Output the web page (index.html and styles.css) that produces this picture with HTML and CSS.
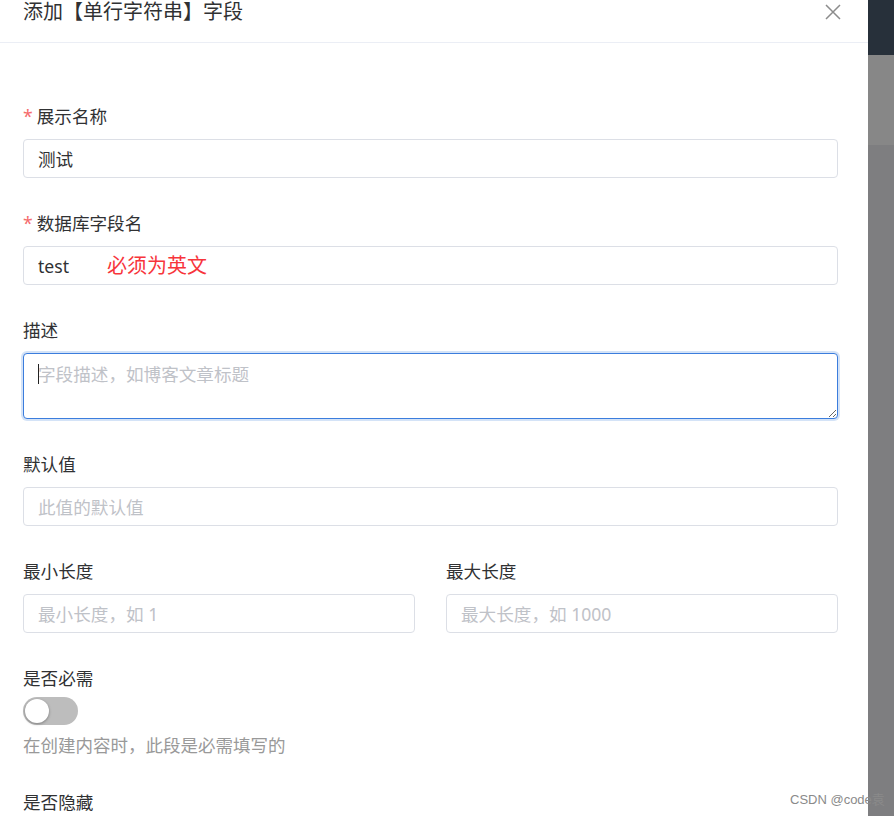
FILE: index.html
```html
<!DOCTYPE html>
<html lang="zh-CN">
<head>
<meta charset="utf-8">
<link rel="stylesheet" href="styles.css">
</head>
<body>
<div class="page">
  <div class="drawer">
    <div class="drawer-header">
      <span class="drawer-title">添加【单行字符串】字段</span>
      <svg class="close" width="16" height="16" viewBox="0 0 16 16"><path d="M1 1 L15 15 M15 1 L1 15" stroke="#8c8c8c" stroke-width="1.5" fill="none"/></svg>
    </div>
    <div class="drawer-body">
      <div class="field">
        <label class="label"><span class="req">*</span>展示名称</label>
        <input class="input" type="text" value="测试">
      </div>
      <div class="field">
        <label class="label"><span class="req">*</span>数据库字段名</label>
        <div class="input-wrap">
          <input class="input" type="text" value="test">
          <span class="note">必须为英文</span>
        </div>
      </div>
      <div class="field">
        <label class="label">描述</label>
        <div class="input-wrap">
          <textarea class="textarea" placeholder="字段描述，如博客文章标题"></textarea>
          <span class="caret"></span>
        </div>
      </div>
      <div class="field">
        <label class="label">默认值</label>
        <input class="input" type="text" placeholder="此值的默认值">
      </div>
      <div class="row">
        <div class="field">
          <label class="label">最小长度</label>
          <input class="input" type="text" placeholder="最小长度，如 1">
        </div>
        <div class="field">
          <label class="label">最大长度</label>
          <input class="input" type="text" placeholder="最大长度，如 1000">
        </div>
      </div>
      <div class="field">
        <label class="label">是否必需</label>
        <div class="switch"><span class="knob"></span></div>
        <div class="help">在创建内容时，此段是必需填写的</div>
      </div>
      <div class="field">
        <label class="label">是否隐藏</label>
      </div>
    </div>
  </div>
  <div class="mask"></div>
  <div class="watermark">CSDN @code袁</div>
</div>
</body>
</html>
```
FILE: styles.css
```css
* { box-sizing: border-box; }
html, body { margin: 0; padding: 0; }
body {
  font-family: "Noto Sans", "Noto Sans CJK SC", sans-serif;
  color: #303133;
  width: 894px;
  height: 816px;
  overflow: hidden;
}
.page {
  position: relative;
  display: flex;
  width: 894px;
  height: 816px;
}
.drawer {
  width: 868px;
  height: 816px;
  background: #fff;
  overflow: hidden;
}
.mask {
  flex: 1;
  background: linear-gradient(to bottom, #27303a 0, #27303a 55px, #878787 55px, #878787 145px, #7e7e80 145px);
}
.drawer-header {
  height: 43px;
  border-bottom: 1px solid #ebeef5;
  display: flex;
  justify-content: space-between;
  align-items: flex-start;
  padding: 0 27px 0 23px;
}
.drawer-title {
  font-size: 20px;
  line-height: 24px;
  color: #303133;
}
.close { margin-top: 4px; }
.drawer-body {
  padding: 61px 30px 0 23px;
  display: flex;
  flex-direction: column;
  gap: 33px;
}
.field {
  display: flex;
  flex-direction: column;
}
.label {
  font-size: 17.6px;
  line-height: 24px;
  color: #303133;
  margin-bottom: 11px;
}
.req {
  color: #f56c6c;
  margin-right: 4px;
}
.input-wrap { position: relative; display: flex; }
.input {
  width: 100%;
  height: 39px;
  border: 1px solid #dcdfe6;
  border-radius: 4px;
  padding: 0 14px;
  font-family: "Noto Sans", "Noto Sans CJK SC", sans-serif;
  font-size: 17.6px;
  color: #303133;
  outline: none;
  background: #fff;
}
.input::placeholder, .textarea::placeholder { color: #bfc2c8; }
.note {
  position: absolute;
  left: 84px;
  top: 7px;
  font-size: 20px;
  line-height: 26px;
  color: #f7353b;
}
.textarea {
  width: 100%;
  height: 66px;
  border: 1px solid #3b7ddd;
  border-radius: 4px;
  box-shadow: 0 0 0 2px #d4e3f7;
  padding: 8px 14px;
  font-family: "Noto Sans", "Noto Sans CJK SC", sans-serif;
  font-size: 17.6px;
  line-height: 24px;
  outline: none;
  resize: vertical;
}
.caret {
  position: absolute;
  left: 15px;
  top: 11px;
  width: 1px;
  height: 20px;
  background: #222;
}
.row {
  display: grid;
  grid-template-columns: 1fr 1fr;
  column-gap: 31px;
}
.switch {
  width: 55px;
  height: 28px;
  border-radius: 14px;
  background: #bdbdbd;
  position: relative;
  margin-top: -4px;
}
.knob {
  position: absolute;
  left: 2px;
  top: 2px;
  width: 24px;
  height: 24px;
  border-radius: 50%;
  background: #fff;
  box-shadow: 0 1px 3px rgba(0,0,0,0.35);
}
.help {
  margin-top: 8px;
  font-size: 17.5px;
  line-height: 24px;
  color: #999;
}
.watermark {
  position: absolute;
  left: 790px;
  top: 792px;
  font-family: "Liberation Sans", "Noto Sans CJK SC", sans-serif;
  font-size: 13px;
  line-height: 16px;
  color: #8a8a8a;
  white-space: nowrap;
}
```
